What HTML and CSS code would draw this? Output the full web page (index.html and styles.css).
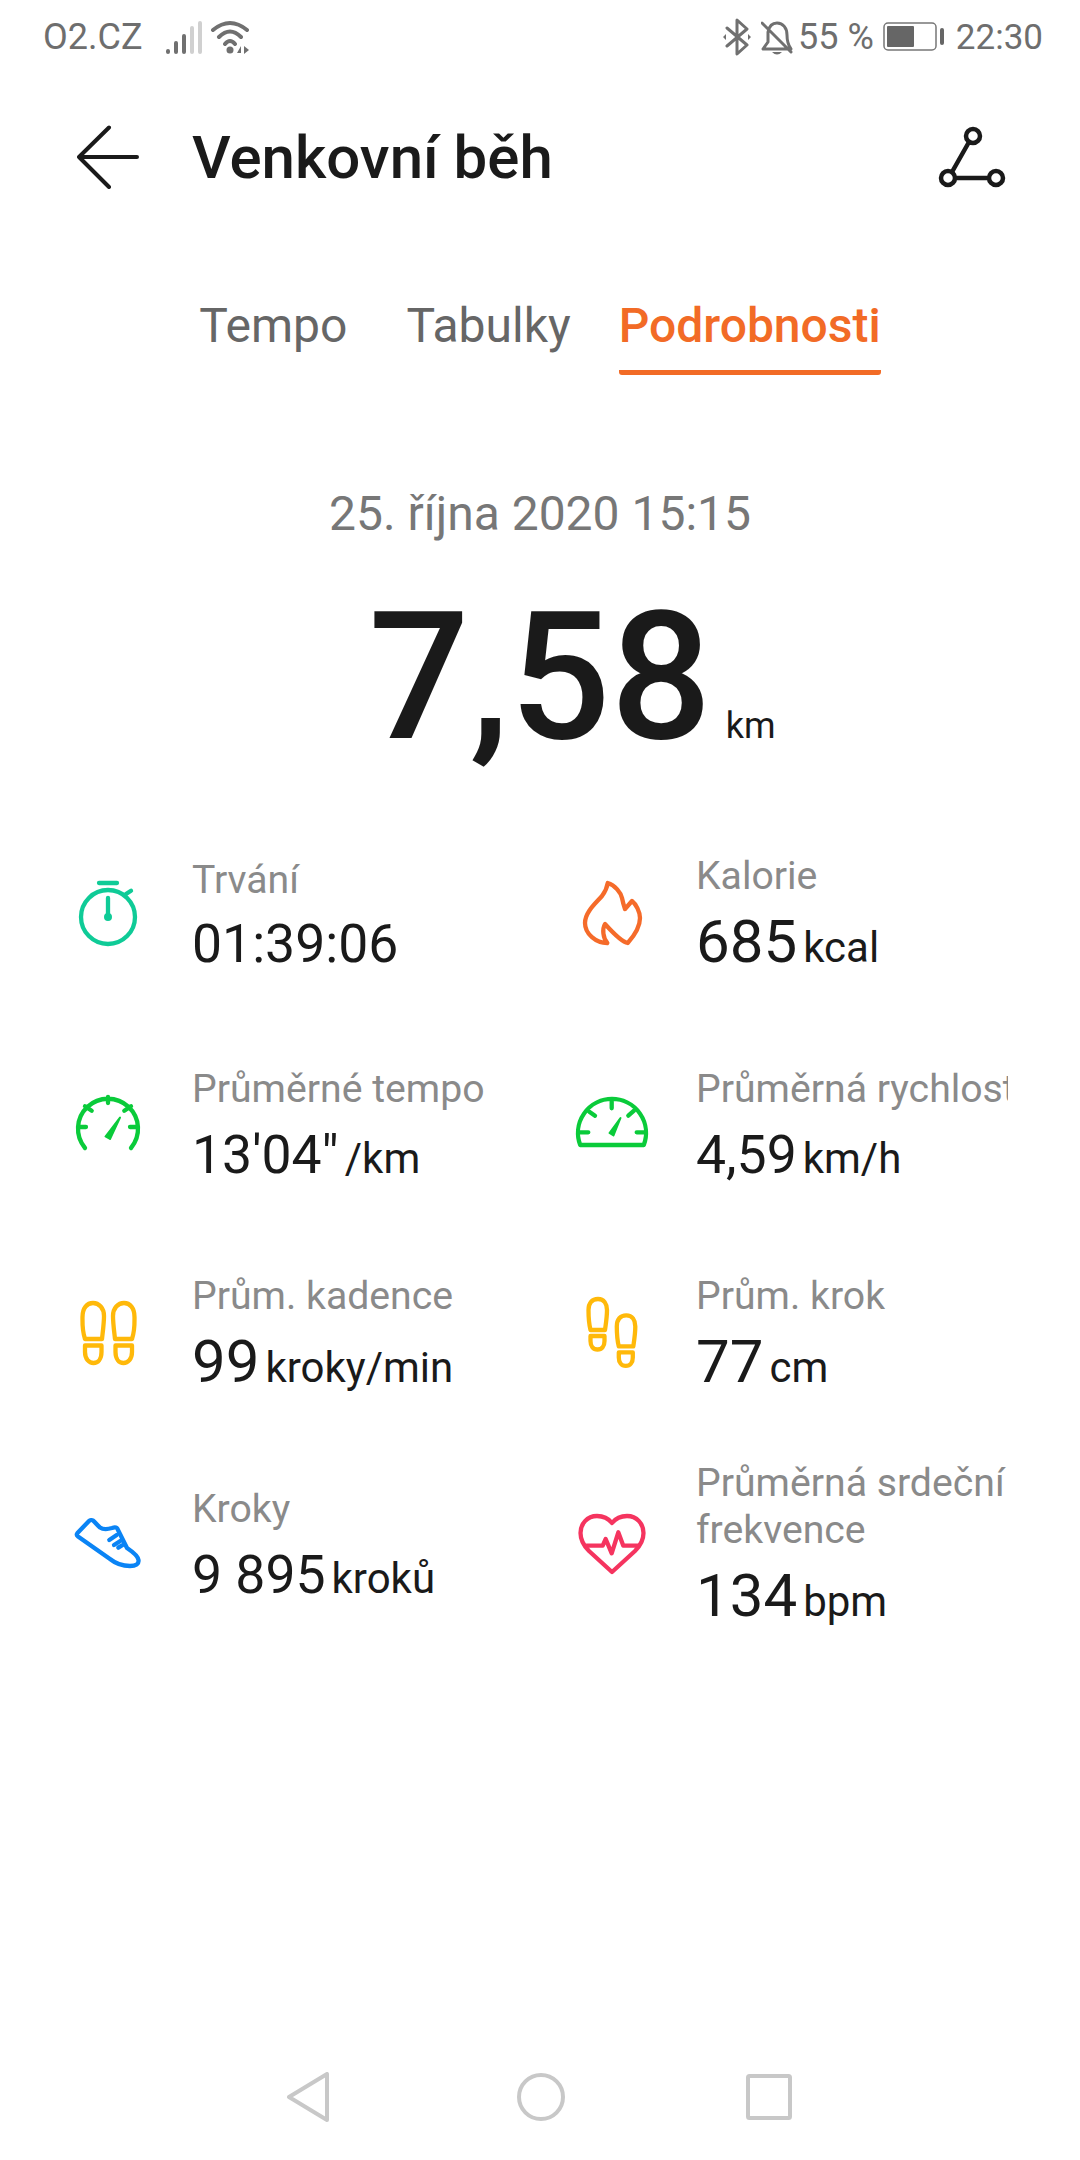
FILE: index.html
```html
<!DOCTYPE html>
<html lang="cs">
<head>
<meta charset="utf-8">
<title>Venkovní běh</title>
<link rel="stylesheet" href="styles.css">
</head>
<body>
<div class="page">

  <!-- stavovy radek -->
  <div class="status">
    <div class="status-left">
      <span>O2.CZ</span>
      <svg class="signal" width="88" height="40" viewBox="162 16 88 40">
        <g fill="none" stroke-width="4" stroke-linecap="round">
          <path class="on" d="M167 50V51M175 42V51M183 35V51"/>
          <path class="off" d="M191 27V51M199 22V51"/>
          <path class="on" d="M212 29Q229 15 246 29M218 36Q229 25 240 36M224 43Q229 37 234 43"/>
        </g>
        <circle class="dot" cx="229" cy="49" r="3.500"/>
        <path class="dot" d="M236 52L240 45V52ZM243 45L248 49L243 53Z"/>
      </svg>
    </div>
    <div class="status-right">
      <svg width="30" height="38" viewBox="721 19 30 38">
        <path class="ico-line" d="M726 29L746 46L736 55V21L746 30L726 47"/>
        <path class="dot" d="M722 38L725 35V41ZM750 38L747 35V41Z"/>
      </svg>
      <svg class="bell" width="32" height="38" viewBox="761 19 32 38">
        <path class="ico-line" d="M763 50H791C788 46 787 42 787 36C787 29 783 24 777 24C772 24 769 28 768 33V43L763 50ZM762 24L791 53"/>
        <path class="dot" d="M772 53H782Q777 58 772 53Z"/>
      </svg>
      <span class="pct">55 %</span>
      <svg class="batt" width="62" height="30" viewBox="884 23 62 30">
        <rect x="885" y="24" width="52" height="27" rx="4" fill="none" stroke="#777" stroke-width="1.500"/>
        <rect x="888" y="27" width="27" height="21" rx="1" fill="#666"/>
        <rect x="941" y="29" width="4" height="17" rx="2" fill="#666"/>
      </svg>
      <span>22:30</span>
    </div>
  </div>

  <!-- hlavicka -->
  <div class="head">
    <svg class="back" width="62" height="64" viewBox="77 129 62 64">
      <path d="M109 131.500L79 161L109 191M79 161H137"/>
    </svg>
    <h1>Venkovní běh</h1>
    <svg class="route" width="68" height="64" viewBox="938 128 68 64">
      <path d="M969 145L952 175M955 181H989"/>
      <circle cx="973" cy="139" r="7"/>
      <circle cx="948" cy="181" r="7"/>
      <circle cx="996" cy="181" r="7"/>
    </svg>
  </div>

  <div class="tabs">
    <div class="tab first">Tempo</div>
    <div class="tab">Tabulky</div>
    <div class="tab active">Podrobnosti</div>
  </div>

  <div class="date">25. října 2020 15:15</div>
  <div class="total"><span class="big">7,58</span><span class="km">km</span></div>

  <!-- hodnoty -->
  <div class="stats">

    <div class="stat">
      <svg class="ic teal" viewBox="0 0 80 80">
        <circle cx="40" cy="41" r="27"/>
        <path d="M31 7H49M58 18L63 14.700M40 22V41"/>
        <circle class="solid" cx="40" cy="41" r="3"/>
      </svg>
      <div class="txt">
        <div class="lbl">Trvání</div>
        <div class="val tight">01:39:06</div>
      </div>
    </div>

    <div class="stat">
      <svg class="ic orange" viewBox="0 0 80 80">
        <path d="M35.700 7C43 9 49 17 50 22C51 27 52 30 53 33L60 25C64 28 68 36 68 42C68 52 62 60 55.700 67C50 66 42 58 33 48C30 53 31 62 35.300 67C24 67 13 58 13 47C13 36 24 27 30 20C33 16 35 12 35.700 7Z"/>
      </svg>
      <div class="txt r1">
        <div class="lbl">Kalorie</div>
        <div class="val lg">685<span class="unit">kcal</span></div>
      </div>
    </div>

    <div class="stat">
      <svg class="ic green" viewBox="0 0 80 80">
        <path d="M17 64A30 30 0 1 1 63 64M40 13V19M10 43H18M62 43H70M17 22.300L23.700 26.700M63 22.300L56.300 26.700"/>
        <path class="solid" d="M37.500 52.500L52 33.500L42 55Z"/>
      </svg>
      <div class="txt r2">
        <div class="lbl">Průměrné tempo</div>
        <div class="val">13'04"<span class="unit">/km</span></div>
      </div>
    </div>

    <div class="stat">
      <svg class="ic green" viewBox="0 0 80 80">
        <path d="M8.200 61A34 34 0 1 1 71.800 61ZM39.700 17.700V24.300M8 48.300H16.300M64.700 48.300H73M17.300 27.700L23 31.700M56.300 31.700L62 26.700"/>
        <path class="solid" d="M37.500 49L48.500 34L41.500 51.500Z"/>
      </svg>
      <div class="txt r2">
        <div class="lbl one">Průměrná rychlost</div>
        <div class="val">4,59<span class="unit">km/h</span></div>
      </div>
    </div>

    <div class="stat">
      <svg class="ic yellow" viewBox="0 0 80 80">
        <path d="M17 47C14 38 14.500 30 14.500 25C14.500 16 19 11 25 11C31 11 36 16 36 24C36 31 35 38 34 47ZM17 53.500H33.500V60C33.500 67 30 71 25.500 71C21 71 17 67 17 60Z"/>
        <path d="M64 47C67 38 66.500 30 66.500 25C66.500 16 62 11 56 11C50 11 45 16 45 24C45 31 46 38 47 47ZM64 53.500H47.500V60C47.500 67 51 71 55.500 71C60 71 64 67 64 60Z"/>
      </svg>
      <div class="txt r2">
        <div class="lbl">Prům. kadence</div>
        <div class="val lg">99<span class="unit">kroky/min</span></div>
      </div>
    </div>

    <div class="stat">
      <svg class="ic yellow" viewBox="0 0 80 80">
        <path d="M18.500 38C16.500 30 16.500 22 16.500 18C16.500 11 20 7 26 7C32 7 35 12 35 18C35 25 34 31 33 38ZM18.500 44H32.500V49C32.500 54 30 57.500 25.500 57.500C21 57.500 18.500 54 18.500 49Z"/>
        <path d="M46.800 54.400C44.800 46.400 44.800 38.400 44.800 34.400C44.800 27.400 48.300 23.400 54.300 23.400C60.300 23.400 63.300 28.400 63.300 34.400C63.300 41.400 62.300 47.400 61.300 54.400ZM46.800 60.400H60.800V65.400C60.800 70.400 58.300 73.900 53.800 73.900C49.300 73.900 46.800 70.400 46.800 65.400Z"/>
      </svg>
      <div class="txt r2">
        <div class="lbl">Prům. krok</div>
        <div class="val lg">77<span class="unit">cm</span></div>
      </div>
    </div>

    <div class="stat">
      <svg class="ic blue" viewBox="0 0 80 80">
        <path d="M21 21L9.500 33Q8 35 10 36.500L42 59C47 63 53 66 62 66C68 66 71 64 70.500 60C70 56 65 52 59 48L50 30C49 27 47 27 44 28C39 29.500 35 29.500 32 27.500C29 25 27 22 25 20.500C24 19.800 22 20 21 21Z"/>
        <path d="M41.300 40L48.700 35M46 45L52.700 40.700M50.300 47.700L54.700 45"/>
      </svg>
      <div class="txt r4">
        <div class="lbl">Kroky</div>
        <div class="val">9 895<span class="unit">kroků</span></div>
      </div>
    </div>

    <div class="stat">
      <svg class="ic red" viewBox="0 0 80 80">
        <path d="M40 23C36 18 30 16 25 16C15 16 8.500 24 8.500 33C8.500 40 12 46 17 51L40 72L63 51C68 46 71.500 40 71.500 33C71.500 24 65 16 55 16C50 16 44 18 40 23Z"/>
        <path d="M14.700 45.700H30.700L33.700 39L39.700 53.300L46.300 32.300L51.300 45.700H66.300"/>
      </svg>
      <div class="txt r4b">
        <div class="lbl">Průměrná srdeční frekvence</div>
        <div class="val lg">134<span class="unit">bpm</span></div>
      </div>
    </div>

  </div>

  <!-- navigace -->
  <div class="nav">
    <svg width="44" height="50" viewBox="285 2072 44 50"><path d="M289 2097L327 2074V2120Z"/></svg>
    <svg width="50" height="50" viewBox="516 2072 50 50"><circle cx="541" cy="2097" r="22"/></svg>
    <svg width="48" height="50" viewBox="745 2072 48 50"><rect x="748" y="2076" width="42" height="42" rx="1.500"/></svg>
  </div>

</div>
</body>
</html>
```

FILE: styles.css
```css
html, body { margin: 0; background: #fff; }
body { font-family: Roboto, "Liberation Sans", sans-serif; color: #1a1a1a; }
.page { width: 1080px; height: 2160px; display: flex; flex-direction: column; overflow: hidden; }

/* status */
.status { height: 74px; display: flex; justify-content: space-between; align-items: center; padding: 0 37px 0 43px; font-size: 35px; color: #6e6e6e; }
.status-left { display: flex; align-items: center; font-size: 36px; }
.status-right { display: flex; align-items: center; }
.signal { margin-left: 20px; }
.on { stroke: #707070; }
.off { stroke: #d0d0d0; }
.dot { fill: #707070; }
.ico-line { fill: none; stroke: #707070; stroke-width: 3; stroke-linecap: round; stroke-linejoin: round; }
.bell { margin-left: 9px; }
.pct { margin-left: 5px; font-size: 36px; }
.batt { margin: 0 11px 0 9px; }

/* header */
.head { height: 166px; display: flex; align-items: center; padding: 0 74px 0 77px; }
.head h1 { flex: 1; margin: 0 0 0 53px; font-size: 60px; font-weight: 500; }
.back path { fill: none; stroke: #1a1a1a; stroke-width: 4; stroke-linecap: round; stroke-linejoin: round; }
.route path, .route circle { fill: none; stroke: #1a1a1a; stroke-width: 4.500; }

/* tabs */
.tabs { display: flex; justify-content: center; gap: 48px; }
.tab { padding: 57px 0 20px; line-height: 58px; font-size: 48px; color: #666; }
.tab.first { margin-right: 11px; }
.tab.active { padding-bottom: 15px; color: #f26b26; font-weight: 500; border-bottom: 5px solid #f26b26; border-radius: 0 0 3px 3px; }

.date { margin-top: 113px; text-align: center; font-size: 48px; line-height: 52px; color: #777; }
.total { display: flex; justify-content: center; align-items: baseline; margin-top: 48px; padding-left: 64px; height: 178px; line-height: 178px; }
.big { font-size: 178px; font-weight: 500; }
.km { font-size: 36px; margin-left: 14px; }

/* stats */
.stats { display: grid; grid-template-columns: 504px 436px; grid-auto-rows: 208px; padding-left: 68px; margin-top: 46px; }
.stat { display: flex; align-items: center; gap: 44px; }
.ic { width: 80px; height: 80px; flex: none; fill: none; stroke-width: 4.300; stroke-linecap: round; stroke-linejoin: round; }
.teal { stroke: #0fcb97; }
.orange { stroke: #f56b2a; }
.green { stroke: #0acb3a; }
.yellow { stroke: #ffb90a; }
.blue { stroke: #0a84f5; }
.red { stroke: #f5345f; }
.teal .solid { fill: #0fcb97; stroke-width: 2; }
.green .solid { fill: #0acb3a; stroke-width: 2; }
.txt { width: 312px; padding-top: 12px; overflow: hidden; }
.txt.r1 { padding-top: 10px; }
.txt.r2 { padding-top: 18px; }
.txt.r4 { padding-top: 26px; }
.txt.r4b { padding-top: 24px; }
.lbl { font-size: 39.200px; line-height: 47px; color: #8a8a8a; }
.lbl.one { white-space: nowrap; }
.val { font-size: 53.500px; line-height: 84px; white-space: nowrap; }
.val.lg { font-size: 60px; }
.val.tight { line-height: 80px; margin-bottom: 4px; }
.unit { font-size: 42px; margin-left: 6px; }

/* nav */
.nav { margin-top: auto; height: 88px; display: flex; }
.nav svg { fill: none; stroke: #c8c8c8; stroke-width: 4; stroke-linejoin: round; }
.nav svg:nth-child(1) { margin-left: 285px; }
.nav svg:nth-child(2) { margin-left: 187px; }
.nav svg:nth-child(3) { margin-left: 179px; }
```
